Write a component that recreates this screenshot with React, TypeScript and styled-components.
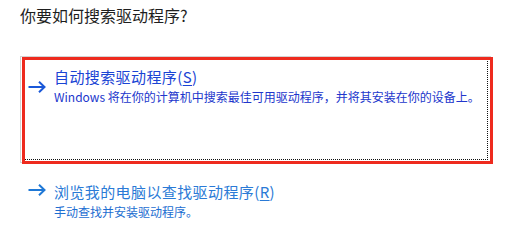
import styled, { createGlobalStyle } from 'styled-components';

const GlobalStyle = createGlobalStyle`
  html, body {
    margin: 0;
    padding: 0;
    background: #ffffff;
  }
  body {
    font-family: "Noto Sans CJK SC", "Noto Sans", sans-serif;
  }
`;

const Page = styled.div`
  width: 511px;
  height: 247px;
  box-sizing: border-box;
  padding: 4px 18px 0 20px;
  overflow: hidden;
`;

const Title = styled.h1`
  margin: 0;
  font-size: 16px;
  font-weight: 400;
  line-height: 22px;
  color: #1e1e1e;
`;

const Options = styled.div`
  margin-top: 30px;
  display: flex;
  flex-direction: column;
  gap: 8px;
`;

const Option = styled.button<{ $focused?: boolean }>`
  position: relative;
  display: grid;
  grid-template-columns: 18px 1fr;
  column-gap: 8px;
  align-items: start;
  width: 471px;
  min-height: ${(p) => (p.$focused ? '107px' : '0')};
  box-sizing: border-box;
  padding: 10px 12px 10px 7px;
  border: 1px solid ${(p) => (p.$focused ? '#d4d4d4' : 'transparent')};
  background: #ffffff;
  text-align: left;
  font-family: inherit;
  cursor: pointer;
  outline: ${(p) => (p.$focused ? '1px dotted #111' : 'none')};
  outline-offset: -4px;

  &::after {
    content: '';
    display: ${(p) => (p.$focused ? 'block' : 'none')};
    position: absolute;
    top: 0;
    left: 1px;
    right: -3px;
    bottom: -2px;
    border: 3px solid #ee2a1e;
    pointer-events: none;
  }
`;

const Arrow = styled.svg<{ $color: string }>`
  grid-row: 1;
  align-self: center;
  width: 18px;
  height: 12px;
  margin-top: 2px;
  stroke: ${(p) => p.$color};
`;

const Texts = styled.div`
  grid-row: 1 / span 2;
  grid-column: 2;
  display: flex;
  flex-direction: column;
`;

const LinkText = styled.span<{ $color: string }>`
  font-size: 15px;
  line-height: 20px;
  letter-spacing: 0.4px;
  color: ${(p) => p.$color};
  white-space: nowrap;

  u {
    text-decoration-thickness: 1px;
    text-underline-offset: 2px;
  }
`;

const Desc = styled.span<{ $color: string }>`
  margin-top: 2px;
  font-size: 12px;
  line-height: 16px;
  color: ${(p) => p.$color};
  white-space: nowrap;
`;

const ArrowIcon = ({ color }: { color: string }) => (
  <Arrow $color={color} viewBox="0 0 18 12" fill="none" strokeWidth={2}>
    <path d="M0.5 6H16.5" />
    <path d="M11 0.8L16.5 6L11 11.2" strokeLinejoin="miter" />
  </Arrow>
);

export default function App() {
  return (
    <>
      <GlobalStyle />
      <Page>
        <Title>你要如何搜索驱动程序?</Title>
        <Options>
          <Option $focused>
            <ArrowIcon color="#1a58d8" />
            <Texts>
              <LinkText $color="#1a44d4">
                自动搜索驱动程序(<u>S</u>)
              </LinkText>
              <Desc $color="#2136cc">
                Windows 将在你的计算机中搜索最佳可用驱动程序，并将其安装在你的设备上。
              </Desc>
            </Texts>
          </Option>
          <Option>
            <ArrowIcon color="#1f78d6" />
            <Texts>
              <LinkText $color="#2a7ad6">
                浏览我的电脑以查找驱动程序(<u>R</u>)
              </LinkText>
              <Desc $color="#1d6ed1">手动查找并安装驱动程序。</Desc>
            </Texts>
          </Option>
        </Options>
      </Page>
    </>
  );
}
